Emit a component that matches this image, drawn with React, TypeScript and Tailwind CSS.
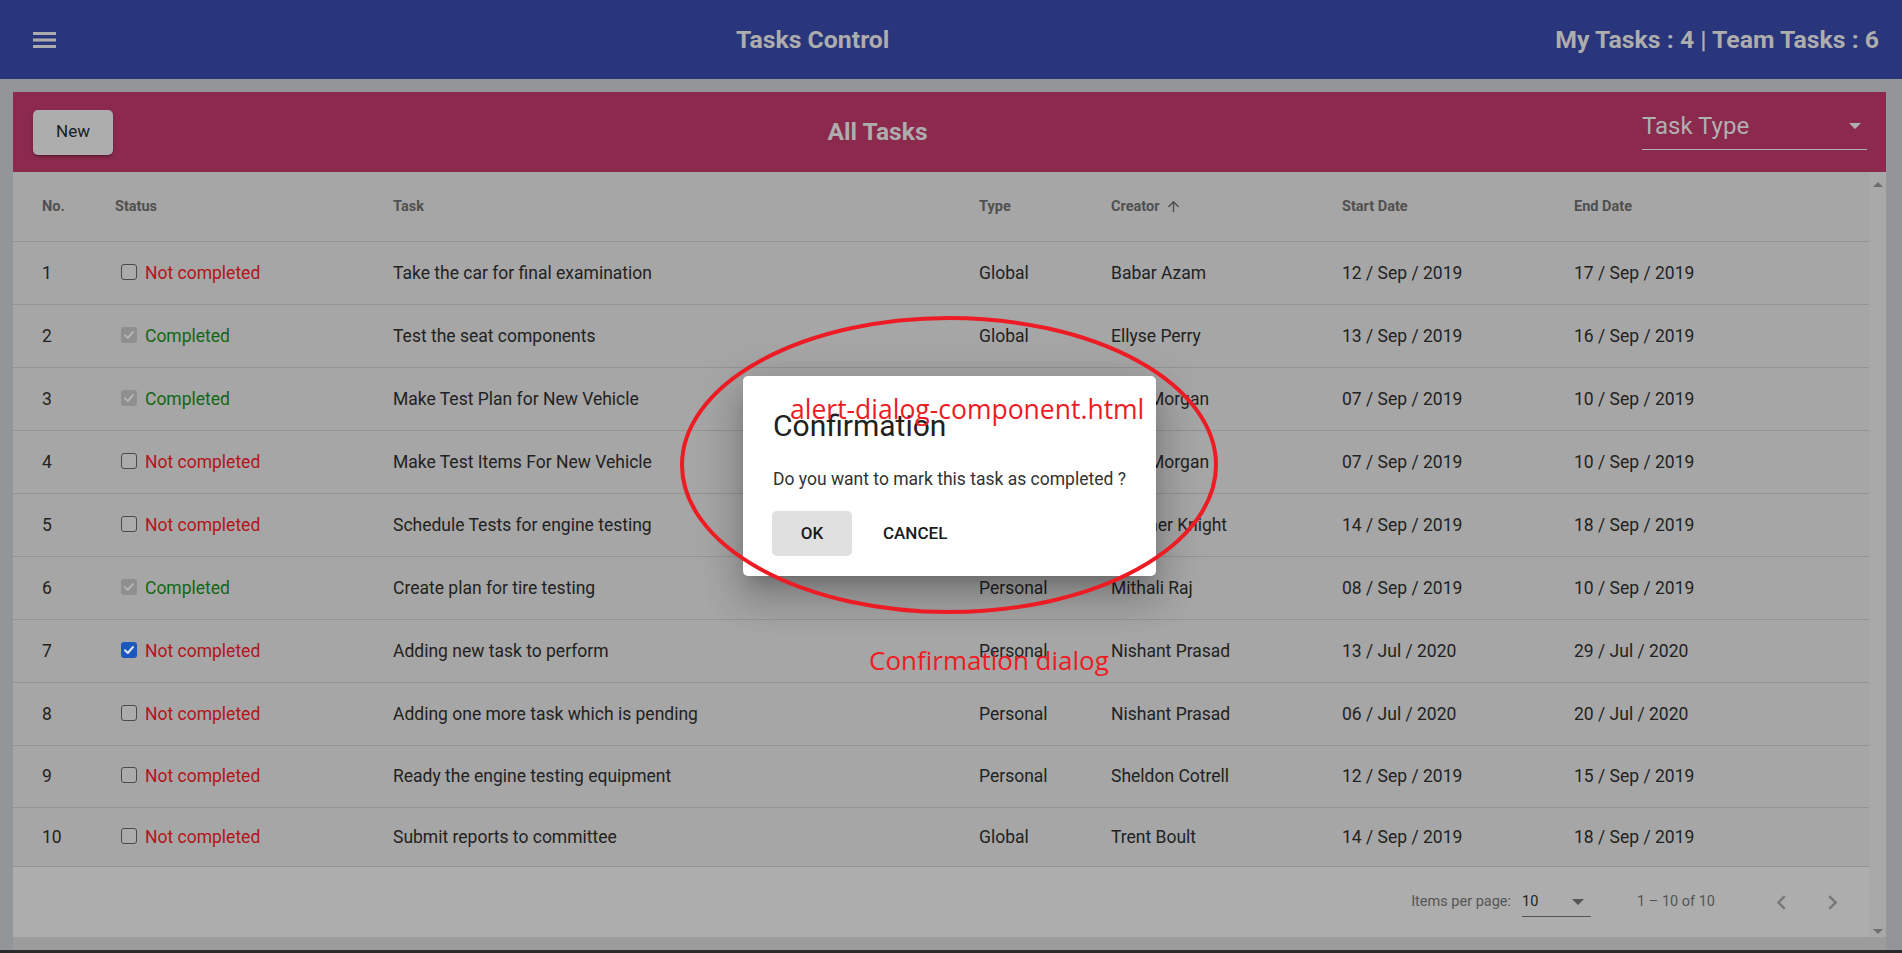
import React from "react";

type Row = {
  no: number;
  done: boolean;
  checked: "none" | "disabled" | "blue";
  task: string;
  type: string;
  creator: string;
  start: string;
  end: string;
  h: string;
};

const rows: Row[] = [
  { no: 1, done: false, checked: "none", task: "Take the car for final examination", type: "Global", creator: "Babar Azam", start: "12 / Sep / 2019", end: "17 / Sep / 2019", h: "h-[63px]" },
  { no: 2, done: true, checked: "disabled", task: "Test the seat components", type: "Global", creator: "Ellyse Perry", start: "13 / Sep / 2019", end: "16 / Sep / 2019", h: "h-[63px]" },
  { no: 3, done: true, checked: "disabled", task: "Make Test Plan for New Vehicle", type: "Global", creator: "Eoin Morgan", start: "07 / Sep / 2019", end: "10 / Sep / 2019", h: "h-[63px]" },
  { no: 4, done: false, checked: "none", task: "Make Test Items For New Vehicle", type: "Global", creator: "Eoin Morgan", start: "07 / Sep / 2019", end: "10 / Sep / 2019", h: "h-[63px]" },
  { no: 5, done: false, checked: "none", task: "Schedule Tests for engine testing", type: "Personal", creator: "Heather Knight", start: "14 / Sep / 2019", end: "18 / Sep / 2019", h: "h-[63px]" },
  { no: 6, done: true, checked: "disabled", task: "Create plan for tire testing", type: "Personal", creator: "Mithali Raj", start: "08 / Sep / 2019", end: "10 / Sep / 2019", h: "h-[63px]" },
  { no: 7, done: false, checked: "blue", task: "Adding new task to perform", type: "Personal", creator: "Nishant Prasad", start: "13 / Jul / 2020", end: "29 / Jul / 2020", h: "h-[63px]" },
  { no: 8, done: false, checked: "none", task: "Adding one more task which is pending", type: "Personal", creator: "Nishant Prasad", start: "06 / Jul / 2020", end: "20 / Jul / 2020", h: "h-[63px]" },
  { no: 9, done: false, checked: "none", task: "Ready the engine testing equipment", type: "Personal", creator: "Sheldon Cotrell", start: "12 / Sep / 2019", end: "15 / Sep / 2019", h: "h-[62px]" },
  { no: 10, done: false, checked: "none", task: "Submit reports to committee", type: "Global", creator: "Trent Boult", start: "14 / Sep / 2019", end: "18 / Sep / 2019", h: "h-[59px]" },
];

function CheckBox({ kind }: { kind: Row["checked"] }) {
  if (kind === "none") {
    return <span className="ml-[6px] mb-[3px] w-[16px] h-[16px] rounded-[3px] border border-[#4a4a4a] bg-[#ababab] shrink-0" />;
  }
  const bg = kind === "blue" ? "bg-[#1a58bd]" : "bg-[#8f8f8f]";
  const stroke = kind === "blue" ? "#e4e4e4" : "#b3b3b3";
  return (
    <span className={`ml-[6px] mb-[3px] w-[16px] h-[16px] rounded-[3px] ${bg} shrink-0 flex items-center justify-center`}>
      <svg width="12" height="12" viewBox="0 0 12 12">
        <path d="M2 6.3 L4.8 9 L10 3" fill="none" stroke={stroke} strokeWidth="2" strokeLinecap="round" strokeLinejoin="round" />
      </svg>
    </span>
  );
}

const grid = "grid grid-cols-[73px_278px_586px_132px_231px_232px_1fr] pl-[29px]";

export default function App() {
  return (
    <div className="w-[1902px] h-[953px] overflow-hidden relative bg-[#939699] border-b-[3px] border-[#2b2b2b] font-['Roboto',sans-serif]">
      {/* Top toolbar */}
      <header className="h-[79px] bg-[#29367b] flex items-center pl-[33px] pr-[23px] text-[#adadad]">
        <button className="w-[37px] h-[40px] flex items-center justify-start shrink-0">
          <svg width="23" height="16" viewBox="0 0 23 16">
            <rect x="0" y="0" width="23" height="3" fill="#adadad" />
            <rect x="0" y="6.5" width="23" height="3" fill="#adadad" />
            <rect x="0" y="13" width="23" height="3" fill="#adadad" />
          </svg>
        </button>
        <div className="flex-1" />
        <h1 className="text-[24.8px] font-bold">Tasks Control</h1>
        <div className="flex-1" />
        <div className="text-[24.8px] font-bold">My Tasks : 4 | Team Tasks : 6</div>
      </header>

      <main className="pl-[13px] pr-[16px] pt-[13px]">
        {/* Pink bar */}
        <div className="h-[80px] bg-[#8c2a4e] flex items-center pl-[20px] pr-[19px]">
          <button className="w-[80px] h-[45px] bg-[#adadad] rounded-[5px] text-[17px] text-[#1c1c1c] shadow-[0_3px_2px_-2px_rgba(0,0,0,0.25),0_2px_4px_0_rgba(0,0,0,0.2)]">
            New
          </button>
          <div className="flex-1" />
          <div className="text-[24.6px] font-bold text-[#adadad]">All Tasks</div>
          <div className="flex-1" />
          <div className="self-start mt-[13px] w-[225px] h-[45px] border-b border-[#b0b0b0] pb-[3px] flex items-center justify-between">
            <span className="text-[24px] text-[#b0b0b0]">Task Type</span>
            <svg width="12" height="6" viewBox="0 0 12 6" className="mr-[6px]">
              <path d="M0 0 L12 0 L6 6 Z" fill="#b0b0b0" />
            </svg>
          </div>
        </div>

        {/* Table + scrollbar */}
        <div className="flex h-[765px]">
          <div className="flex-1 flex flex-col bg-[#a6a6a6]">
            <div className={`${grid} h-[70px] border-b border-[#939393] items-center text-[14.5px] font-bold text-[#505050]`}>
              <div>No.</div>
              <div>Status</div>
              <div>Task</div>
              <div>Type</div>
              <div className="flex items-center">
                <span>Creator</span>
                <svg width="17" height="17" viewBox="0 0 24 24" className="ml-[6px]">
                  <path d="M4 12l1.41 1.41L11 7.83V20h2V7.83l5.58 5.59L20 12l-8-8-8 8z" fill="#4f4f4f" />
                </svg>
              </div>
              <div>Start Date</div>
              <div>End Date</div>
            </div>
            {rows.map((r) => (
              <div key={r.no} className={`${grid} ${r.h} border-b border-[#939393] items-center text-[17.5px] text-[#222]`}>
                <div>{r.no}</div>
                <div className="flex items-center gap-[8px]">
                  <CheckBox kind={r.checked} />
                  <span className={r.done ? "text-[#136613]" : "text-[#b3141a]"}>
                    {r.done ? "Completed" : "Not completed"}
                  </span>
                </div>
                <div>{r.task}</div>
                <div>{r.type}</div>
                <div>{r.creator}</div>
                <div>{r.start}</div>
                <div>{r.end}</div>
              </div>
            ))}
            {/* Paginator */}
            <div className="flex-1 bg-[#adadad] flex items-center justify-end pr-[13px] text-[14.5px] text-[#555]">
              <span>Items per page:</span>
              <div className="ml-[11px] w-[69px] h-[30px] border-b border-[#555] flex items-center justify-between">
                <span className="text-[#222]">10</span>
                <svg width="12" height="6" viewBox="0 0 12 6" className="mr-[7px]">
                  <path d="M0 0 L12 0 L6 6 Z" fill="#555" />
                </svg>
              </div>
              <span className="ml-[46px]">1 – 10 of 10</span>
              <button className="ml-[42px] w-[48px] h-[48px] flex items-center justify-center">
                <svg width="29" height="29" viewBox="0 0 24 24">
                  <path d="M15.41 7.41L14 6l-6 6 6 6 1.41-1.41L10.83 12z" fill="#777" />
                </svg>
              </button>
              <button className="ml-[3px] w-[48px] h-[48px] flex items-center justify-center">
                <svg width="29" height="29" viewBox="0 0 24 24">
                  <path d="M10 6L8.59 7.41 13.17 12l-4.58 4.59L10 18l6-6z" fill="#777" />
                </svg>
              </button>
            </div>
          </div>
          {/* scrollbar */}
          <div className="w-[17px] bg-[#a9a9a9] flex flex-col items-center justify-between pt-[10px] pb-[3px]">
            <svg width="10" height="5" viewBox="0 0 10 5">
              <path d="M0 5 L10 5 L5 0 Z" fill="#6e6e6e" />
            </svg>
            <svg width="10" height="5" viewBox="0 0 10 5">
              <path d="M0 0 L10 0 L5 5 Z" fill="#6e6e6e" />
            </svg>
          </div>
        </div>
        <div className="h-[13px] bg-[#9c9c9c]" />
      </main>

      {/* Dialog */}
      <div className="absolute left-[743px] top-[376px] w-[413px] h-[200px] bg-white rounded-[5px] pl-[30px] pr-[28px] shadow-[0_11px_15px_-7px_rgba(0,0,0,0.2),0_24px_38px_3px_rgba(0,0,0,0.14),0_9px_46px_8px_rgba(0,0,0,0.12)]">
        <h2 className="pt-[32px] text-[30px] leading-[36px] text-[#212121] font-normal">Confirmation</h2>
        <p className="mt-[23px] text-[17.5px] leading-[24px] text-[#333] whitespace-nowrap">Do you want to mark this task as completed ?</p>
        <div className="mt-[20px] -ml-[1px] flex gap-[14px]">
          <button className="w-[80px] h-[45px] bg-[#e0e0e0] rounded-[5px] text-[17px] font-medium text-[#1a1a1a]">OK</button>
          <button className="h-[45px] px-[17px] text-[17px] font-medium text-[#1a1a1a]">CANCEL</button>
        </div>
      </div>

      {/* Annotations */}
      <svg className="absolute left-[678px] top-[314px]" width="544" height="304" viewBox="0 0 544 304">
        <ellipse cx="271" cy="151" rx="267" ry="147" fill="none" stroke="#ed1c24" strokeWidth="4" />
      </svg>
      <div className="absolute left-[790px] top-[396px] text-[26.5px] leading-none text-[#ed1c24] font-['Open_Sans',sans-serif] whitespace-nowrap">
        alert-dialog-component.html
      </div>
      <div className="absolute left-[869px] top-[647px] text-[26px] leading-none text-[#ed1c24] font-['Open_Sans',sans-serif] whitespace-nowrap">
        Confirmation dialog
      </div>
    </div>
  );
}
